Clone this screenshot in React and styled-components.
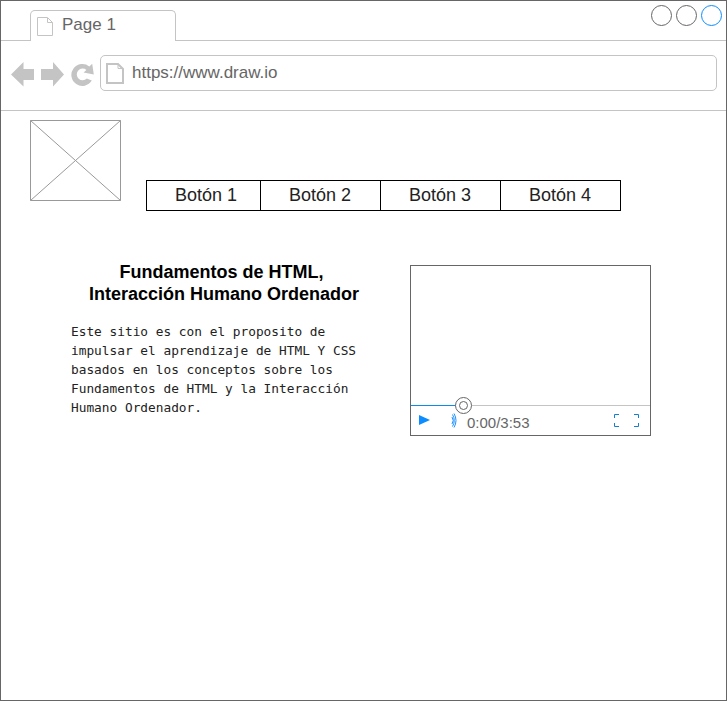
import React from "react";
import styled, { createGlobalStyle } from "styled-components";

const GlobalStyle = createGlobalStyle`
  * { box-sizing: border-box; }
  body { margin: 0; background: #fff; font-family: "Liberation Sans", Arial, sans-serif; }
  svg { display: block; flex: none; }
`;

const BrowserWindow = styled.div`
  width: 727px;
  height: 701px;
  border: 1px solid #666;
  background: #fff;
  overflow: hidden;
`;

const TabStrip = styled.div`
  height: 40px;
  display: flex;
  justify-content: space-between;
  padding: 0 4px 0 29px;
  border-bottom: 1px solid #c4c4c4;
`;

const Tab = styled.div`
  width: 146px;
  height: 31px;
  margin-top: 9px;
  padding: 6px 0 0 6px;
  display: flex;
  align-items: flex-start;
  gap: 9px;
  background: #fff;
  border: 1px solid #c4c4c4;
  border-bottom: none;
  border-radius: 5px 5px 0 0;
`;

const ChromeText = styled.span`
  font-size: 17px;
  line-height: 20px;
  color: #666;
  margin-top: ${(p) => p.$shift || 0}px;
`;

const WindowButtons = styled.div`
  display: flex;
  gap: 4px;
  padding-top: 4px;
`;

const WindowButton = styled.span`
  width: 21px;
  height: 21px;
  border: 1px solid ${(p) => (p.$active ? "#0c8cff" : "#666")};
  border-radius: 50%;
`;

const Toolbar = styled.div`
  height: 70px;
  display: flex;
  align-items: flex-start;
  padding: 14px 9px 0 10px;
  border-bottom: 1px solid #c4c4c4;
`;

const NavIcons = styled.div`
  display: flex;
  gap: 7px;
  width: 89px;
  padding-top: 7px;
`;

const AddressBar = styled.div`
  flex: 1;
  height: 36px;
  display: flex;
  gap: 8px;
  padding: 7px 0 0 5px;
  border: 1px solid #c4c4c4;
  border-radius: 5px;
`;

const PageHeader = styled.header`
  display: flex;
  align-items: flex-start;
  gap: 25px;
  padding: 9px 0 0 29px;
`;

const Menu = styled.nav`
  margin-top: 60px;
  display: flex;
  border: 1px solid #000;
`;

const MenuItem = styled.div`
  width: ${(p) => p.$width}px;
  height: 29px;
  padding-left: 28px;
  font-size: 18px;
  line-height: 29px;
  color: #222;
  & + & { border-left: 1px solid #000; }
`;

const Main = styled.main`
  display: flex;
  align-items: flex-start;
  padding: 50px 0 0 70px;
`;

const Article = styled.article`
  width: 339px;
`;

const Title = styled.h1`
  margin: 0;
  width: 306px;
  font-size: 18px;
  line-height: 22px;
  font-weight: 700;
  text-align: center;
  color: #000;
`;

const TitleLine = styled.span`
  display: block;
  padding-right: ${(p) => p.$trail || 0}px;
`;

const Body = styled.p`
  margin: 17px 0 0;
  font-family: "DejaVu Sans Mono", Consolas, monospace;
  font-size: 12.8px;
  line-height: 19px;
  color: #222;
  white-space: pre;
`;

const Player = styled.section`
  width: 241px;
  height: 171px;
  margin-top: 4px;
  border: 1px solid #666;
`;

const Screen = styled.div`
  height: 139px;
`;

const Track = styled.div`
  position: relative;
  height: 1px;
  background: #c4c4c4;
`;

const Progress = styled.div`
  width: 52px;
  height: 1px;
  background: #0c8ce9;
`;

const Knob = styled.svg`
  position: absolute;
  left: 43px;
  top: -9px;
`;

const Controls = styled.div`
  height: 29px;
  display: flex;
  align-items: flex-start;
  padding: 8px 10px 0 8px;
`;

const Volume = styled.svg`
  margin: -1px 0 0 21px;
`;

const Time = styled.span`
  margin: 0 0 0 9px;
  font-size: 15px;
  line-height: 17px;
  color: #666;
`;

const Fullscreen = styled.svg`
  margin-left: auto;
`;

const PageIcon = ({ w, h, stroke, fold }) => (
  <svg width={w} height={h} fill="none" stroke="#c4c4c4" strokeWidth={stroke}>
    <path
      d={`M${stroke / 2} ${stroke / 2}H${w - fold - stroke / 2}L${w - stroke / 2} ${fold + stroke / 2}V${h - stroke / 2}H${stroke / 2}Z`}
    />
    <path strokeWidth="1" d={`M${w - fold - stroke / 2} 1V${fold + 0.5}H${w - stroke / 2}`} />
  </svg>
);

const items = [
  { label: "Botón 1", width: 113 },
  { label: "Botón 2", width: 120 },
  { label: "Botón 3", width: 120 },
  { label: "Botón 4", width: 120 },
];

export default function App() {
  return (
    <>
      <GlobalStyle />
      <BrowserWindow>
        <TabStrip>
          <Tab>
            <PageIcon w={16} h={19} stroke={1} fold={5} />
            <ChromeText $shift={-2}>Page 1</ChromeText>
          </Tab>
          <WindowButtons>
            <WindowButton />
            <WindowButton />
            <WindowButton $active />
          </WindowButtons>
        </TabStrip>
        <Toolbar>
          <NavIcons>
            <svg width="23" height="25" fill="#c4c4c4">
              <path d="M0 12.5L12.5 0V7H23V18H12.5V24.5Z" />
            </svg>
            <svg width="23" height="25" fill="#c4c4c4">
              <path d="M23 12.5L12 0V7H0V18H12V24.5Z" />
            </svg>
            <svg width="24" height="25" fill="#c4c4c4">
              <path d="M18.3 4.4L21.2 1.8L22.8 12.6L12.6 10.6L15.4 8A5.8 5.8 0 1 0 15.8 16.4L20.8 18.6A11 11 0 1 1 18.3 4.4Z" />
            </svg>
          </NavIcons>
          <AddressBar>
            <PageIcon w={18} h={21} stroke={2} fold={5} />
            <ChromeText>https://www.draw.io</ChromeText>
          </AddressBar>
        </Toolbar>
        <PageHeader>
          <svg width="91" height="81" fill="none" stroke="#999">
            <path d="M.5 .5H90.5V80.5H.5ZL90.5 80.5M90.5 .5L.5 80.5" />
          </svg>
          <Menu>
            {items.map((item) => (
              <MenuItem key={item.label} $width={item.width}>
                {item.label}
              </MenuItem>
            ))}
          </Menu>
        </PageHeader>
        <Main>
          <Article>
            <Title>
              <TitleLine $trail={5}>Fundamentos de HTML,</TitleLine>
              <TitleLine>Interacción Humano Ordenador</TitleLine>
            </Title>
            <Body>
              {`Este sitio es con el proposito de
impulsar el aprendizaje de HTML Y CSS
basados en los conceptos sobre los
Fundamentos de HTML y la Interacción
Humano Ordenador.`}
            </Body>
          </Article>
          <Player>
            <Screen />
            <Track>
              <Progress />
              <Knob width="19" height="19" fill="#fff" stroke="#666">
                <circle cx="9.5" cy="9.5" r="8" />
                <circle cx="9.5" cy="9.5" r="4" />
              </Knob>
            </Track>
            <Controls>
              <svg width="11" height="12" fill="#0c8cff">
                <path d="M0 1L11 6L0 11Z" />
              </svg>
              <Volume width="7" height="15" fill="none" stroke="#1e90ff">
                <path d="M1 4Q3.5 7.5 1 11M1.5 1.5Q5 7.5 1.5 13.5M3 .5Q7 7.5 3 14.5" />
              </Volume>
              <Time>0:00/3:53</Time>
              <Fullscreen width="27" height="13" fill="none" stroke="#1580d2">
                <path d="M1.5 4V.5H6M1.5 9V12.5H6M21 .5H25.5V4M21 12.5H25.5V9" />
              </Fullscreen>
            </Controls>
          </Player>
        </Main>
      </BrowserWindow>
    </>
  );
}
